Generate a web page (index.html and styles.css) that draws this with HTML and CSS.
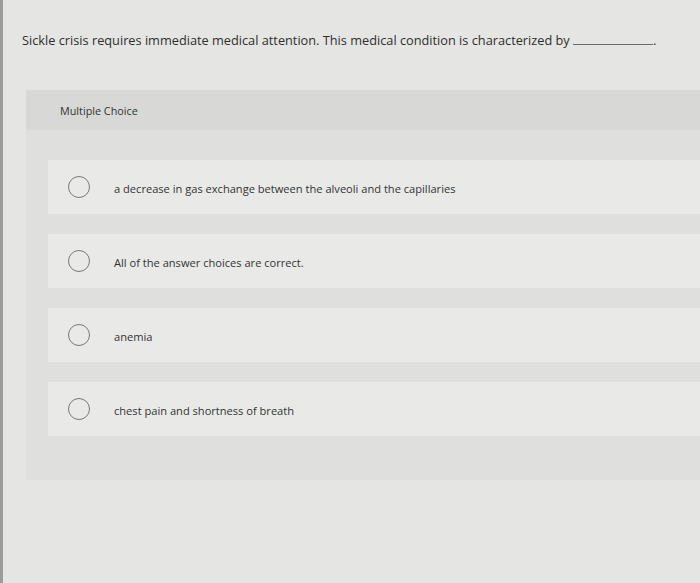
FILE: index.html
```html
<!DOCTYPE html>
<html lang="en">
<head>
<meta charset="utf-8">
<title>Multiple Choice</title>
<link rel="stylesheet" href="styles.css">
</head>
<body>
<div class="page">
  <p class="question">Sickle crisis requires immediate medical attention. This medical condition is characterized by <span class="blank"></span>.</p>
  <section class="panel">
    <div class="panel-header">Multiple Choice</div>
    <div class="choices">
      <label class="choice"><span class="radio"></span><span class="label">a decrease in gas exchange between the alveoli and the capillaries</span></label>
      <label class="choice"><span class="radio"></span><span class="label">All of the answer choices are correct.</span></label>
      <label class="choice"><span class="radio"></span><span class="label">anemia</span></label>
      <label class="choice"><span class="radio"></span><span class="label">chest pain and shortness of breath</span></label>
    </div>
  </section>
</div>
</body>
</html>
```

FILE: styles.css
```css
html, body {
  margin: 0;
  padding: 0;
  background: #e5e6e3;
}
body {
  font-family: "Open Sans", "Liberation Sans", sans-serif;
  color: #3b3b3b;
}
.page {
  border-left: 3px solid #9c9c9a;
  min-height: 583px;
  box-sizing: border-box;
  padding-top: 31px;
}
.question {
  margin: 0;
  padding-left: 19px;
  font-size: 12.75px;
  line-height: 18px;
  color: #2e2e2e;
}
.blank {
  display: inline-block;
  width: 80px;
  border-bottom: 1px solid #6a6a6a;
  vertical-align: baseline;
}
.panel {
  margin: 41px 0 0 23px;
  background: #dfe0de;
  padding-bottom: 44px;
}
.panel-header {
  height: 40px;
  display: flex;
  align-items: center;
  padding-left: 34px;
  background: #d8d9d7;
  font-size: 10.8px;
  color: #333;
}
.choices {
  display: flex;
  flex-direction: column;
  gap: 20px;
  padding: 30px 0 0 22px;
}
.choice {
  height: 54px;
  display: flex;
  align-items: center;
  background: #e9eae8;
  padding-left: 20px;
  font-size: 11.1px;
  color: #333;
}
.label {
  padding-top: 3px;
}
.radio {
  width: 20px;
  height: 20px;
  border: 1.4px solid #787878;
  border-radius: 50%;
  flex: none;
  margin-right: 24px;
}
```
